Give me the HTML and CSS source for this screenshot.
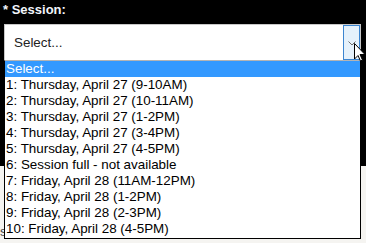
FILE: index.html
```html
<!doctype html>
<html lang="en">
<head>
<meta charset="utf-8">
<title>Session</title>
<link rel="stylesheet" href="styles.css">
</head>
<body>

<div class="field">
	<label class="field-label">* Session:</label>
	<div class="select">
		<span class="select-value">Select...</span>
		<span class="select-btn">
			<svg width="8" height="5" viewBox="0 0 8 5"><path d="M0.5 0.5 L4 4 L7.5 0.5" fill="none" stroke="#6d6d6d" stroke-width="1"/></svg>
		</span>
	</div>
</div>

<div class="below">
	<p class="below-text">s</p>
</div>

<ul class="options">
	<li class="--active">Select...</li>
	<li>1: Thursday, April 27 (9-10AM)</li>
	<li>2: Thursday, April 27 (10-11AM)</li>
	<li>3: Thursday, April 27 (1-2PM)</li>
	<li>4: Thursday, April 27 (3-4PM)</li>
	<li>5: Thursday, April 27 (4-5PM)</li>
	<li>6: Session full - not available</li>
	<li>7: Friday, April 28 (11AM-12PM)</li>
	<li>8: Friday, April 28 (1-2PM)</li>
	<li>9: Friday, April 28 (2-3PM)</li>
	<li>10: Friday, April 28 (4-5PM)</li>
</ul>

<svg class="cursor" width="12" height="19" viewBox="0 0 12 19"><path d="M0.5 0.5 L0.5 16 L4 12.5 L6.5 18 L8.5 17 L6 11.5 L11 11.5 Z" fill="#fff" stroke="#000" stroke-width="1"/></svg>

</body>
</html>
```

FILE: styles.css
```css
body {
	margin: 0;
	padding: 0;
	font-family: 'Liberation Sans', Arial, sans-serif;
	font-size: 13px;
	background: #f5f4f1;
	position: relative;
	height: 243px;
	overflow: hidden;
}

.field {
	background: #000;
	height: 166px;
	padding: 2px 0 0 4px;
	box-sizing: border-box;
}

.field-label {
	display: block;
	color: #f2f5fb;
	font-weight: 700;
	font-size: 13px;
	line-height: 15px;
	margin-left: -1px;
}

.select {
	display: flex;
	align-items: center;
	margin-top: 7px;
	width: 357px;
	height: 37px;
	box-sizing: border-box;
	background: #fff;
	border: 1px solid #c8c8c8;
	border-bottom-color: #a8a8a8;
}

.select-value {
	flex: 1;
	padding-left: 9px;
	color: #222;
	font-size: 13.4px;
}

.select-btn {
	display: flex;
	align-items: center;
	justify-content: center;
	width: 17px;
	height: 35px;
	box-sizing: border-box;
	background: #e5f1fb;
	border: 1px solid #3c85d0;
	padding-top: 2px;
}

.below-text {
	margin: 0;
	padding: 58px 0 0 0;
	color: #444;
	line-height: 16px;
	font-size: 13.4px;
}

.options {
	position: absolute;
	top: 60px;
	left: 4px;
	width: 357px;
	margin: 0;
	padding: 0 0 1px;
	box-sizing: border-box;
	list-style: none;
	background: #fff;
	border: 1px solid #000;
	border-top-color: #b4b4b4;
	font-size: 13.4px;
}

.options li {
	height: 16px;
	line-height: 16px;
	padding-left: 1px;
	color: #000;
	white-space: nowrap;
}

.options .--active {
	background: #3399ff;
	color: #fff;
}

.cursor {
	position: absolute;
	top: 43px;
	left: 354px;
}
```
